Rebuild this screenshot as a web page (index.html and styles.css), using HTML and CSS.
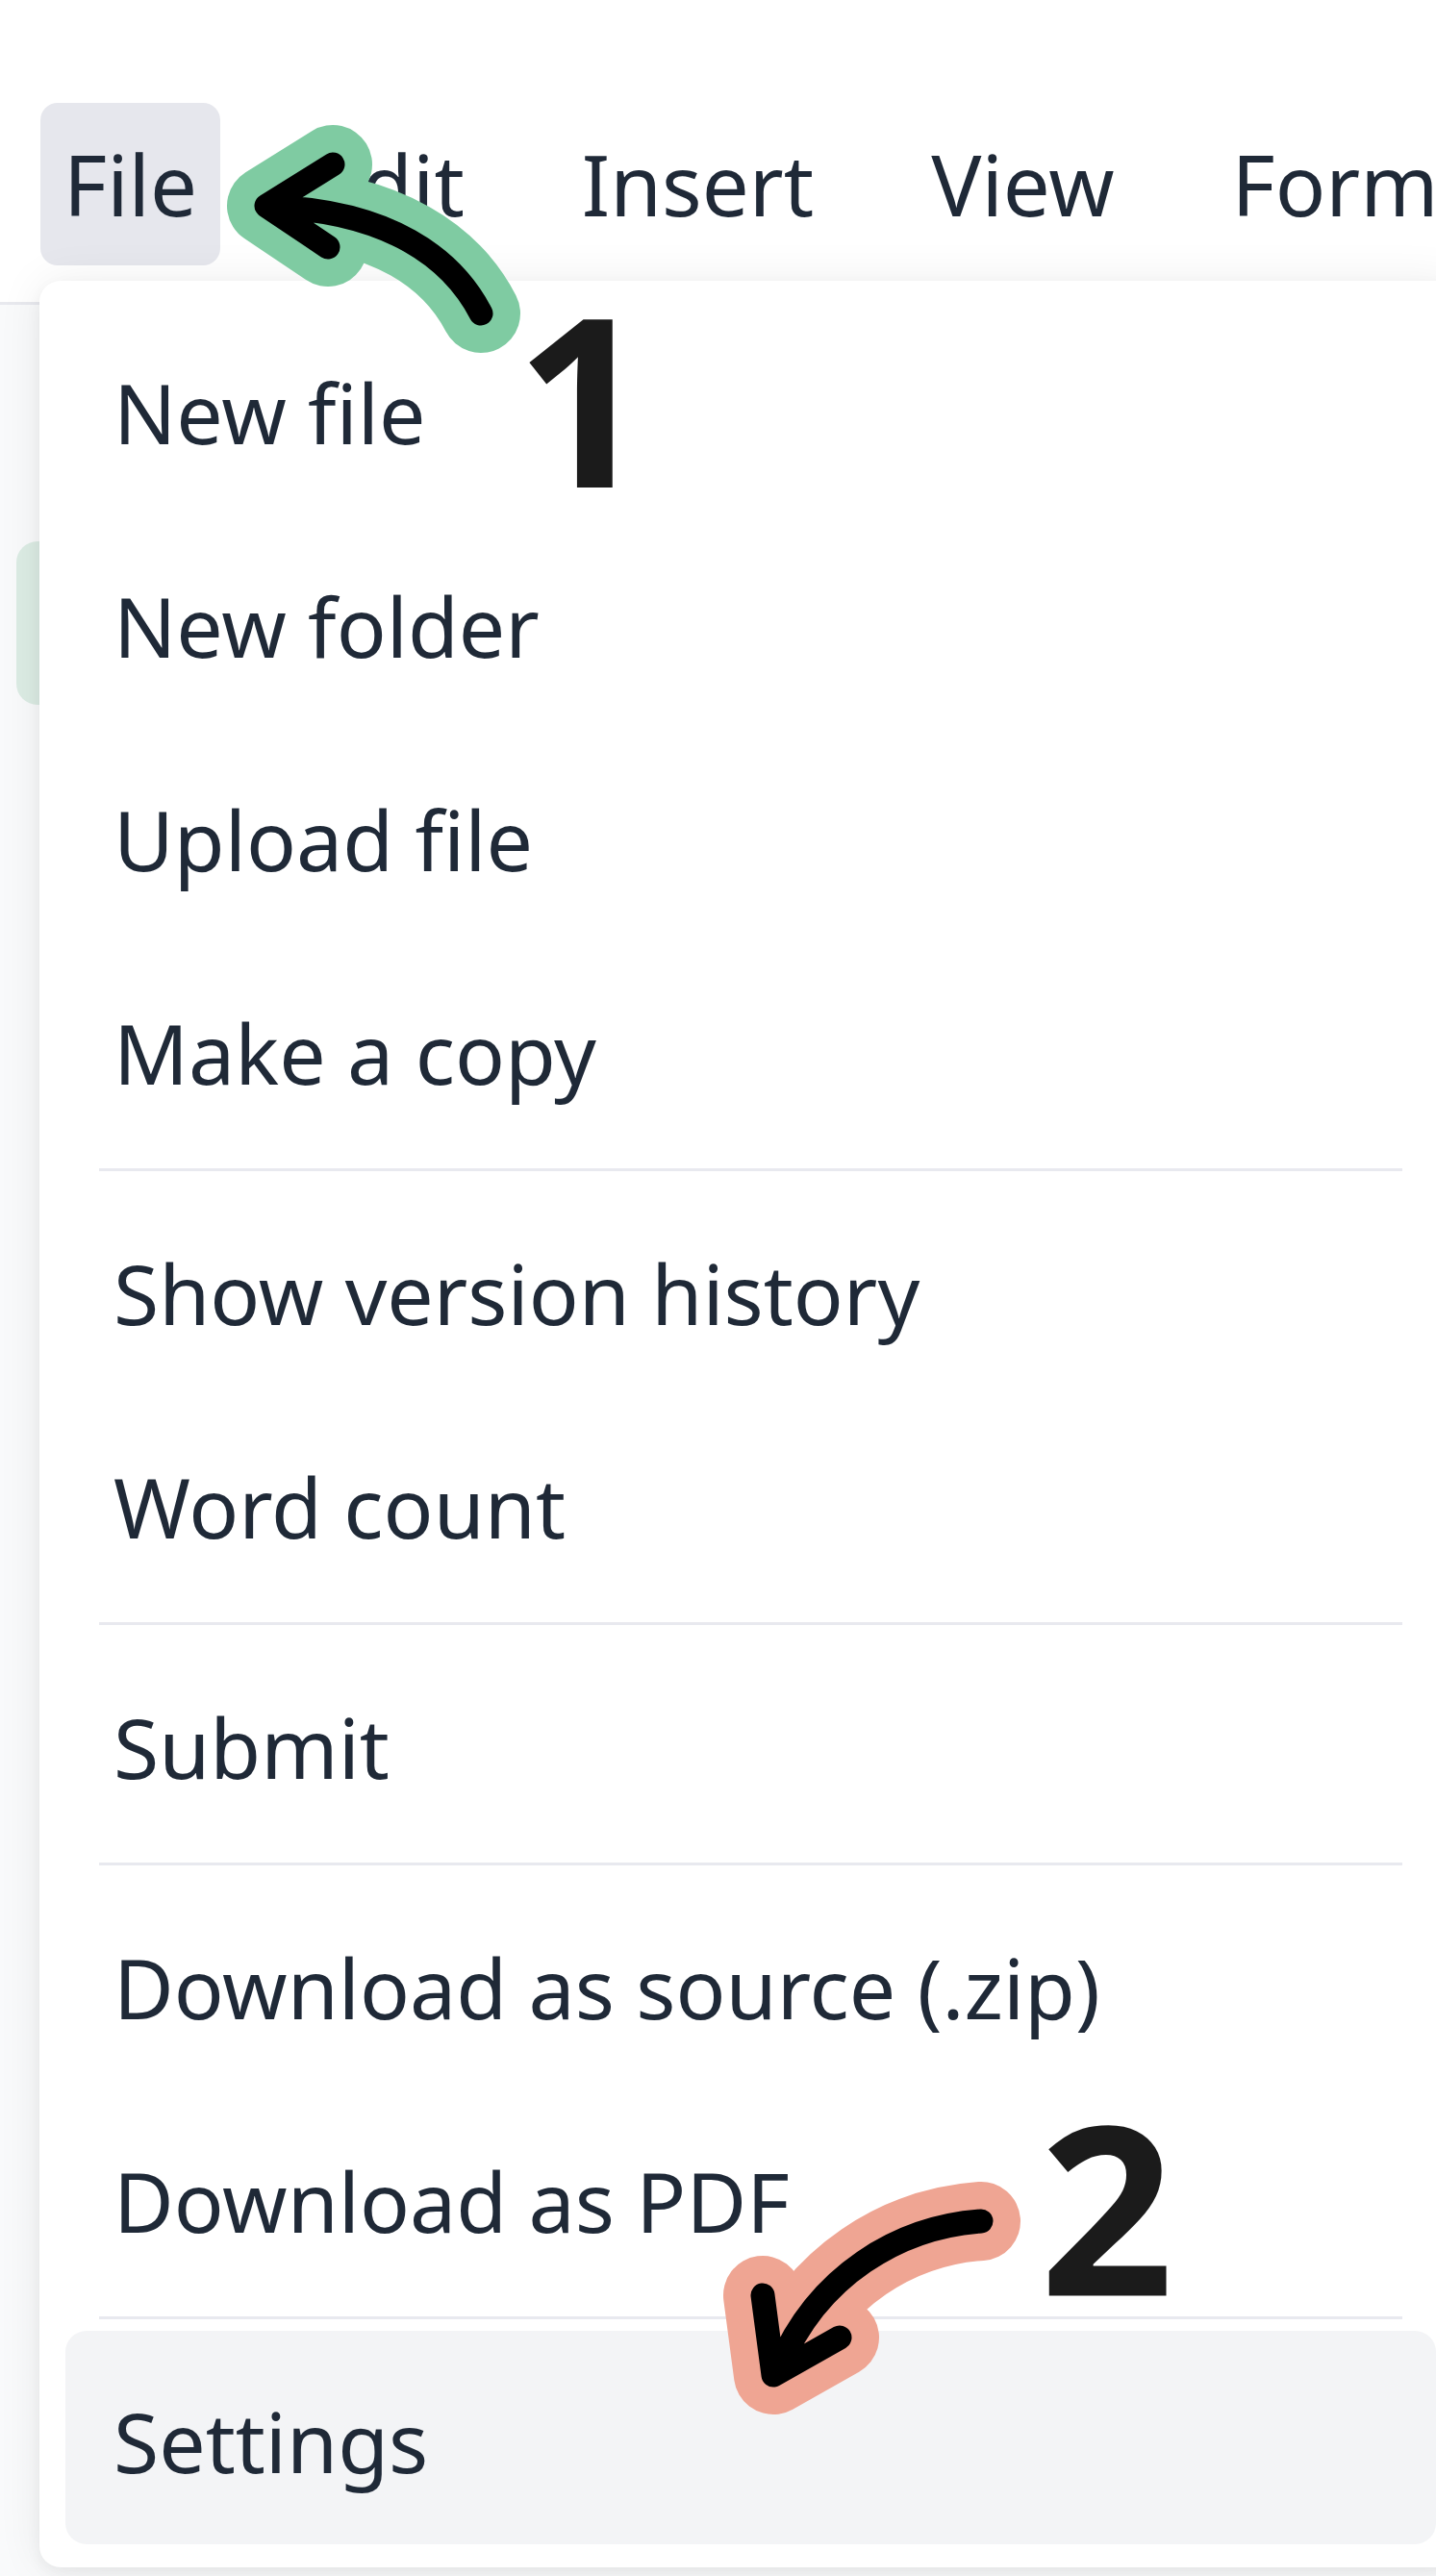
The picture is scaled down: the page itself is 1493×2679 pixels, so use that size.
FILE: index.html
```html
<!DOCTYPE html>
<html lang="en">
<head>
<meta charset="utf-8">
<title>File menu</title>
<link rel="stylesheet" href="styles.css">
</head>
<body>
<div class="app">
  <header class="topbar">
    <nav class="menubar">
      <button class="menubar-item is-open">File</button>
      <button class="menubar-item">Edit</button>
      <button class="menubar-item">Insert</button>
      <button class="menubar-item">View</button>
      <button class="menubar-item">Format</button>
    </nav>
  </header>
  <main class="workspace">
    <aside class="sidebar">
      <div class="side-item is-active"></div>
    </aside>
  </main>

  <div class="dropdown" role="menu">
    <div class="dd-item">New file</div>
    <div class="dd-item">New folder</div>
    <div class="dd-item">Upload file</div>
    <div class="dd-item">Make a copy</div>
    <div class="dd-sep"></div>
    <div class="dd-item">Show version history</div>
    <div class="dd-item">Word count</div>
    <div class="dd-sep"></div>
    <div class="dd-item">Submit</div>
    <div class="dd-sep"></div>
    <div class="dd-item">Download as source (.zip)</div>
    <div class="dd-item">Download as PDF</div>
    <div class="dd-sep"></div>
    <div class="dd-item is-hover">Settings</div>
  </div>

  <svg class="annotations" width="1493" height="2679" viewBox="0 0 1493 2679" aria-hidden="true">
    <g class="arrow arrow-green">
      <path class="halo" d="M500 326 C470 268 405 220 283 215 M346 171 L277 214 L341 257"/>
      <path class="ink" d="M500 326 C470 268 405 220 283 215 M346 171 L277 214 L341 257"/>
    </g>
    <g class="arrow arrow-salmon">
      <path class="halo" d="M1020 2310 C935 2316 850 2366 810 2462 M793 2387 L804 2470 L873 2431"/>
      <path class="ink" d="M1020 2310 C935 2316 850 2366 810 2462 M793 2387 L804 2470 L873 2431"/>
    </g>
  </svg>
  <span class="step step-1">1</span>
  <span class="step step-2">2</span>
</div>
</body>
</html>
```

FILE: styles.css
```css
* { box-sizing: border-box; }

html, body {
  margin: 0;
  padding: 0;
}

body {
  width: 1493px;
  height: 2679px;
  overflow: hidden;
  background: #f9fafb;
  font-family: "Noto Sans", "Open Sans", "Liberation Sans", sans-serif;
  color: #1f2937;
}

.app {
  position: relative;
  width: 1493px;
  height: 2679px;
  overflow: hidden;
}

.topbar {
  background: #ffffff;
  padding: 107px 0 38px 42px;
  border-bottom: 3px solid #e8e9ee;
}

.menubar {
  display: flex;
  gap: 74px;
  white-space: nowrap;
}

.menubar-item {
  font: inherit;
  font-size: 87px;
  line-height: 119px;
  color: #1f2937;
  background: transparent;
  border: 0;
  border-radius: 18px;
  padding: 25px 24px;
  flex: none;
}

.menubar-item.is-open {
  background: #e6e7ed;
}

.workspace {
  display: flex;
  padding: 246px 0 0 17px;
}

.sidebar {
  width: 200px;
}

.side-item {
  height: 170px;
  border-radius: 22px;
}

.side-item.is-active {
  background: #dcece4;
}

.dropdown {
  position: absolute;
  top: 292px;
  left: 41px;
  width: 1479px;
  padding: 22px 27px 24px;
  background: #ffffff;
  border-radius: 22px;
  box-shadow: 0 0 48px rgba(0, 0, 0, 0.07), 0 6px 16px rgba(0, 0, 0, 0.05);
}

.dd-item {
  font-size: 86px;
  line-height: 119px;
  padding: 55px 50px 48px;
  border-radius: 22px;
  white-space: nowrap;
}

.dd-item.is-hover {
  background: #f3f4f6;
}

.dd-sep {
  height: 3px;
  margin: 13px 35px 12px;
  background: #e8e9ef;
}

.annotations {
  position: absolute;
  top: 0;
  left: 0;
  pointer-events: none;
}

.arrow path {
  fill: none;
  stroke-linecap: round;
  stroke-linejoin: round;
}

.arrow .ink {
  stroke: #000000;
  stroke-width: 25px;
}

.arrow .halo {
  stroke-width: 82px;
}

.arrow-green .halo { stroke: #7fcba2; }
.arrow-salmon .halo { stroke: #efa593; }

.step {
  position: absolute;
  font-family: "Noto Sans", "Open Sans", sans-serif;
  font-weight: 700;
  font-size: 244px;
  line-height: 1;
  color: #1b1b1b;
}

.step-1 { top: 290px; left: 536px; }
.step-2 { top: 2170px; left: 1081px; }
```
